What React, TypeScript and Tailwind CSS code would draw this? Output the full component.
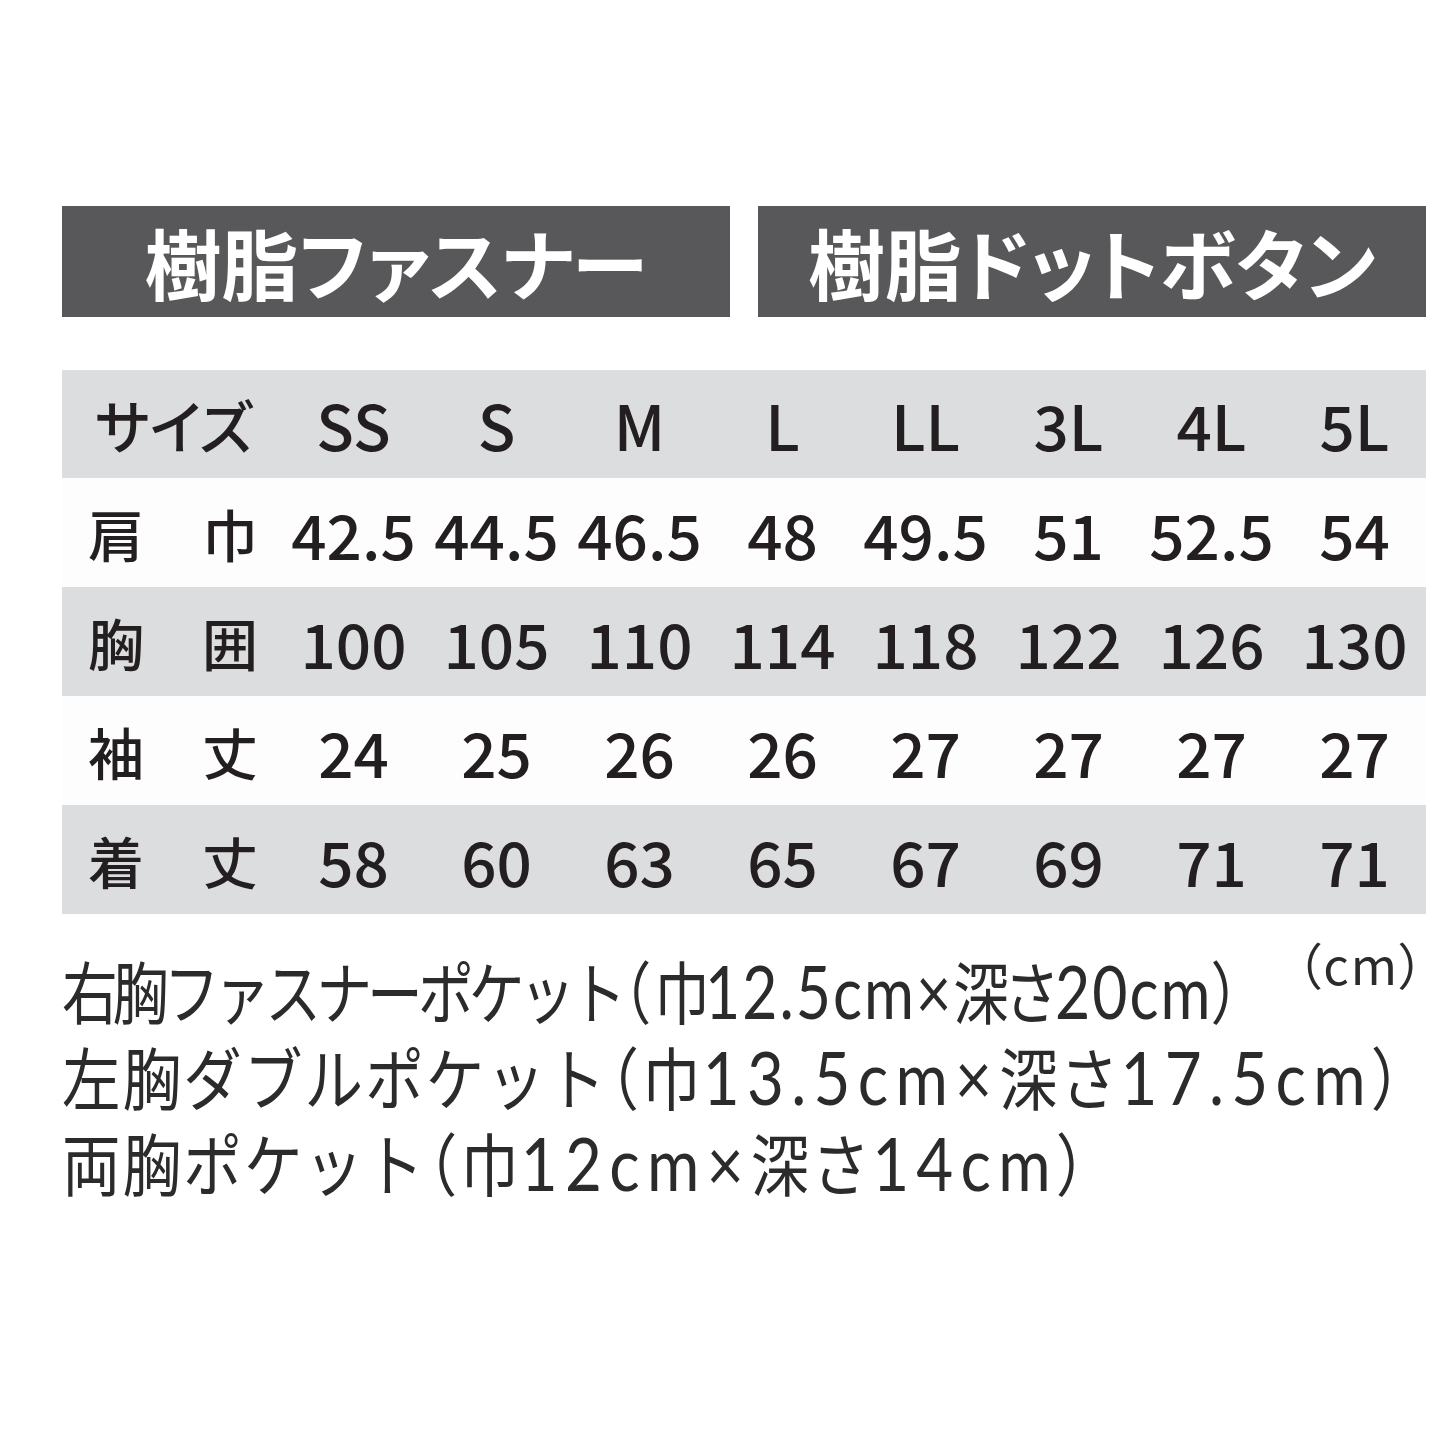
const sizes = ["SS", "S", "M", "L", "LL", "3L", "4L", "5L"]

const rows = [
  { label: ["肩", "巾"], values: ["42.5", "44.5", "46.5", "48", "49.5", "51", "52.5", "54"] },
  { label: ["胸", "囲"], values: ["100", "105", "110", "114", "118", "122", "126", "130"] },
  { label: ["袖", "丈"], values: ["24", "25", "26", "26", "27", "27", "27", "27"] },
  { label: ["着", "丈"], values: ["58", "60", "63", "65", "67", "69", "71", "71"] },
]

// first line is set tighter than the other two, as in the print layout
const notes = [
  {
    text: "右胸ファスナーポケット（巾12.5cm×深さ20cm）",
    line: "origin-left scale-x-[0.82]",
    kana: "tracking-[-6px]",
    latin: "tracking-[2.5px]",
  },
  {
    text: "左胸ダブルポケット（巾13.5cm×深さ17.5cm）",
    line: "origin-left scale-x-[0.86]",
    kana: "tracking-[2.5px]",
    latin: "tracking-[8.5px]",
  },
  {
    text: "両胸ポケット（巾12cm×深さ14cm）",
    line: "origin-left scale-x-[0.86]",
    kana: "tracking-[2.5px]",
    latin: "tracking-[8.5px]",
  },
]

function Heading({ children }: { children: string }) {
  return (
    <div className="flex h-[111px] items-center justify-center bg-[#58585a]">
      <span className="text-[77px] font-bold leading-none text-white [font-feature-settings:'palt']">{children}</span>
    </div>
  )
}

function Note({ text, line, kana, latin }: { text: string; line: string; kana: string; latin: string }) {
  const parts = text.split(/([0-9.a-z]+|×|（|）)/).filter(Boolean)
  return (
    <div className={line}>
      {parts.map((p, i) => {
        if (p === "（")
          return (
            <span key={i} className="tracking-[6px] [font-feature-settings:'palt']">
              {p}
            </span>
          )
        if (p === "）")
          return (
            <span key={i} className="[font-feature-settings:'palt']">
              {p}
            </span>
          )
        if (/^([0-9.a-z]+|×)$/.test(p))
          return (
            <span key={i} className={`font-['Lato','Noto_Sans',sans-serif] text-[74px] ${latin}`}>
              {p}
            </span>
          )
        return (
          <span key={i} className={kana}>
            {p}
          </span>
        )
      })}
    </div>
  )
}

export default function App() {
  return (
    <div className="h-[1445px] w-[1445px] bg-white pl-[62px] pr-[19px] pt-[206px] font-['Noto_Sans_CJK_JP','Noto_Sans',sans-serif] text-[#231f20]">
      <div className="grid grid-cols-2 gap-[28px]">
        <Heading>樹脂ファスナー</Heading>
        <Heading>樹脂ドットボタン</Heading>
      </div>

      <div className="mt-[53px] font-medium">
        <div className="grid h-[108px] grid-cols-[220px_repeat(8,1fr)] items-center bg-[#dcdddf]">
          <div className="flex justify-center pl-[4px] text-[58px] leading-none [font-feature-settings:'palt']">サイズ</div>
          {sizes.map((s) => (
            <div key={s} className="text-center text-[62px] leading-none">
              {s}
            </div>
          ))}
        </div>
        {rows.map((row, i) => (
          <div
            key={row.label.join("")}
            className={`grid h-[109px] grid-cols-[220px_repeat(8,1fr)] items-center ${i % 2 === 0 ? "bg-[#fdfdfd]" : "bg-[#dcdddf]"}`}
          >
            <div className="flex justify-between pl-[26px] pr-[24px] text-[56px] leading-none">
              <span>{row.label[0]}</span>
              <span>{row.label[1]}</span>
            </div>
            {row.values.map((v, j) => (
              <div key={j} className="text-center text-[62px] leading-none">
                {v}
              </div>
            ))}
          </div>
        ))}
      </div>

      <div className="mt-[33px] flex items-start text-[#2b2b2b]">
        <div className="w-0 flex-1 whitespace-nowrap text-[68px] leading-[85px]">
          {notes.map((n) => (
            <Note key={n.text} {...n} />
          ))}
        </div>
        <div className="-mt-[9px] shrink-0 text-[50px] leading-none tracking-[2px] [font-feature-settings:'palt']">（cm）</div>
      </div>
    </div>
  )
}
